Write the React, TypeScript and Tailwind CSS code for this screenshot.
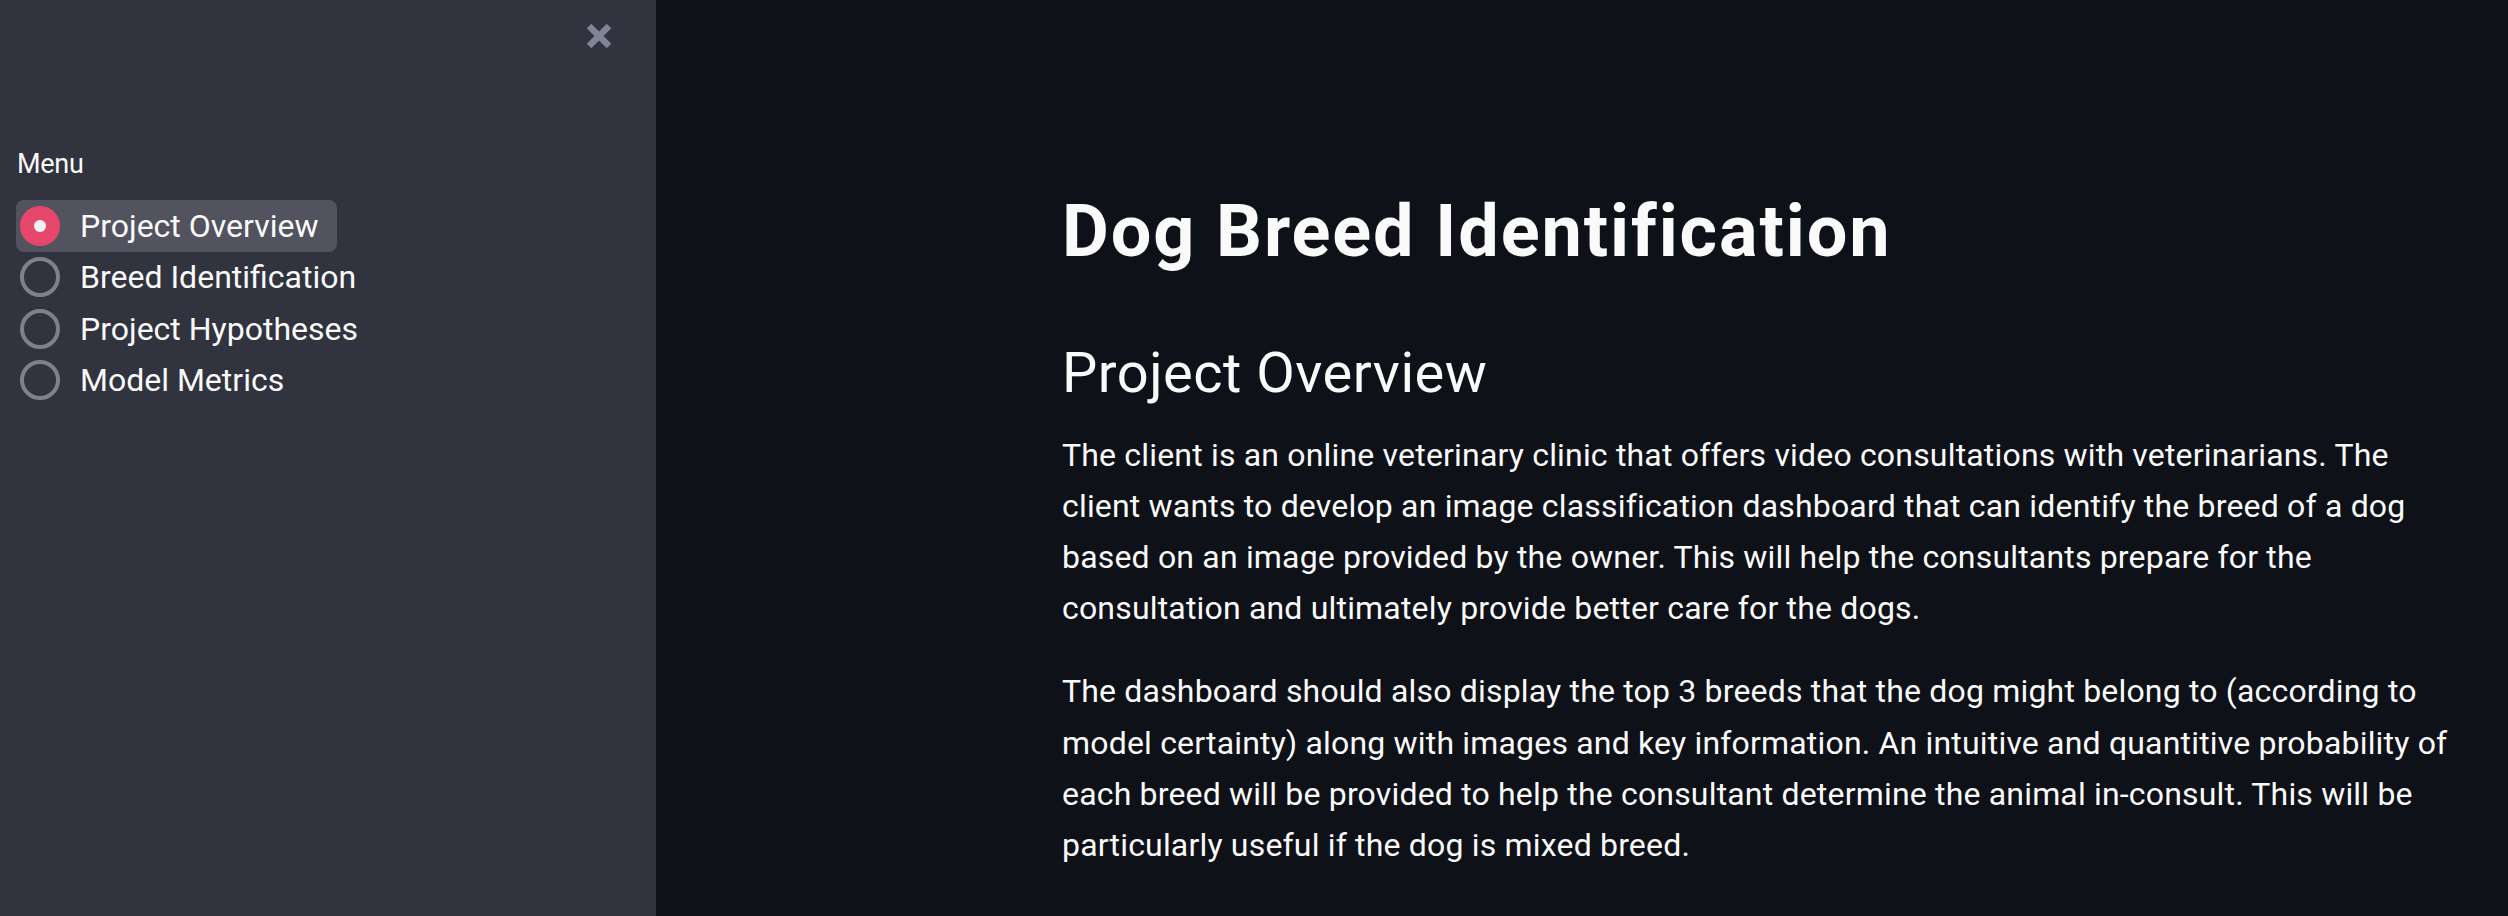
import React from "react";

const items = ["Project Overview", "Breed Identification", "Project Hypotheses", "Model Metrics"];

const p1 = [
  "The client is an online veterinary clinic that offers video consultations with veterinarians. The",
  "client wants to develop an image classification dashboard that can identify the breed of a dog",
  "based on an image provided by the owner. This will help the consultants prepare for the",
  "consultation and ultimately provide better care for the dogs.",
];
const p2 = [
  "The dashboard should also display the top 3 breeds that the dog might belong to (according to",
  "model certainty) along with images and key information. An intuitive and quantitive probability of",
  "each breed will be provided to help the consultant determine the animal in-consult. This will be",
  "particularly useful if the dog is mixed breed.",
];

export default function App() {
  return (
    <div className="flex w-full h-[916px] overflow-hidden [font-family:Roboto,sans-serif] text-[#fafafa]">
      <aside className="w-[656px] shrink-0 h-full bg-[#31333f] flex flex-col">
        <div className="flex justify-end pt-[22px] pr-[43px]">
          <svg width="28" height="28" viewBox="0 0 28 28">
            <path d="M4 4 L24 24 M24 4 L4 24" stroke="#808495" strokeWidth="6.5" strokeLinecap="butt" />
          </svg>
        </div>
        <div className="pl-[17px] mt-[97px] text-[27px] leading-[34px] tracking-[-0.3px]">Menu</div>
        <div className="mt-[19px] pl-4 flex flex-col items-start">
          {items.map((it, i) => (
            <div
              key={it}
              className={
                "h-[51.5px] flex items-center gap-[20px] pl-1 pr-[19px] rounded-[8px] " +
                (i === 0 ? "bg-[#52535e]" : "")
              }
            >
              {i === 0 ? (
                <span className="w-10 h-10 rounded-full bg-[#e5486c] flex items-center justify-center">
                  <span className="w-3 h-3 rounded-full bg-[#f0f2f6]" />
                </span>
              ) : (
                <span className="w-10 h-10 rounded-full border-4 border-[#7f8089] box-border" />
              )}
              <span className="text-[32px] leading-[40px] whitespace-nowrap">{it}</span>
            </div>
          ))}
        </div>
      </aside>
      <main className="flex-1 h-full bg-[#0e1117] pl-[406px] pt-[189px]">
        <h1 className="text-[72px] leading-[86.4px] font-bold whitespace-nowrap tracking-[1.9px]">Dog Breed Identification</h1>
        <h2 className="mt-[64.5px] text-[56px] leading-[67.2px] font-normal whitespace-nowrap tracking-[0.5px]">Project Overview</h2>
        <p className="mt-[22.5px] text-[32px] leading-[51.2px] tracking-[0.18px]">
          {p1.map((l) => (
            <span key={l} className="block whitespace-nowrap">{l}</span>
          ))}
        </p>
        <p className="mt-[32px] text-[32px] leading-[51.2px] tracking-[0.18px]">
          {p2.map((l) => (
            <span key={l} className="block whitespace-nowrap">{l}</span>
          ))}
        </p>
      </main>
    </div>
  );
}
